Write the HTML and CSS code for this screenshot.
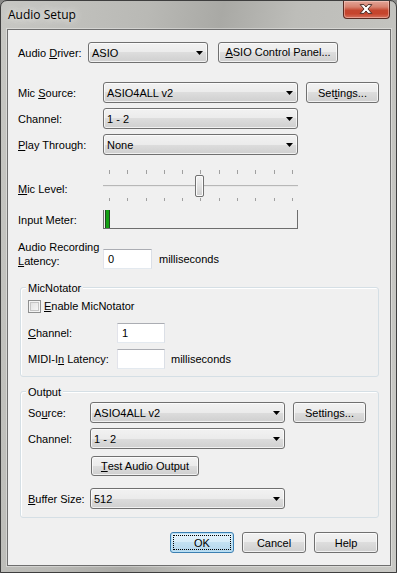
FILE: index.html
```html
<!DOCTYPE html>
<html>
<head>
<meta charset="utf-8">
<link rel="stylesheet" href="styles.css">
</head>
<body>
<div class="window">
  <div class="titlebar">
    <span class="title">Audio Setup</span>
    <div class="close">
      <svg width="47" height="18" viewBox="0 0 47 18">
        <path d="M17.5 4.5h4l2 2.5 2-2.5h4l-4 4.5 4 4.5h-4l-2-2.5-2 2.5h-4l4-4.5z" fill="#fff" stroke="#4a2a24" stroke-width="1" stroke-linejoin="round"/>
      </svg>
    </div>
  </div>
  <div class="client">
    <div class="row r1">
      <span class="lbl w70">Audio <u>D</u>river:</span>
      <div class="combo w120"><span>ASIO</span><svg class="arr" width="7" height="4" viewBox="0 0 7 4"><path d="M0 0h7L3.5 4z"/></svg></div>
      <div class="btn btn-asio"><u>A</u>SIO Control Panel...</div>
    </div>
    <div class="row r2">
      <span class="lbl w85">Mic <u>S</u>ource:</span>
      <div class="combo w195"><span>ASIO4ALL v2</span><svg class="arr" width="7" height="4" viewBox="0 0 7 4"><path d="M0 0h7L3.5 4z"/></svg></div>
      <div class="btn btn-set">Set<u>t</u>ings...</div>
    </div>
    <div class="row r3">
      <span class="lbl w85">Channel:</span>
      <div class="combo w195"><span>1 - 2</span><svg class="arr" width="7" height="4" viewBox="0 0 7 4"><path d="M0 0h7L3.5 4z"/></svg></div>
    </div>
    <div class="row r3">
      <span class="lbl w85"><u>P</u>lay Through:</span>
      <div class="combo w195"><span>None</span><svg class="arr" width="7" height="4" viewBox="0 0 7 4"><path d="M0 0h7L3.5 4z"/></svg></div>
    </div>
    <div class="row r-slider">
      <span class="lbl w85 lbl-slider"><u>M</u>ic Level:</span>
      <div class="slider">
        <div class="ticks top"><i></i><i></i><i></i><i></i><i></i><i></i><i></i><i></i><i></i><i></i><i></i></div>
        <div class="track"></div>
        <div class="ticks bot"><i></i><i></i><i></i><i></i><i></i><i></i><i></i><i></i><i></i><i></i><i></i></div>
        <div class="thumb"></div>
      </div>
    </div>
    <div class="row r-meter">
      <span class="lbl w85">Input Meter:</span>
      <div class="meter"><div class="bar"></div></div>
    </div>
    <div class="row r-lat">
      <span class="lbl w85 lbl-2">Audio Recording<br><u>L</u>atency:</span>
      <div class="input w49">0</div>
      <span class="ms ms1">milliseconds</span>
    </div>

    <div class="group g1">
      <span class="gtitle">MicNotator</span>
      <div class="grow g-check">
        <span class="check"></span><span class="ctext"><u>E</u>nable MicNotator</span>
      </div>
      <div class="grow g-ch">
        <span class="lbl w89"><u>C</u>hannel:</span>
        <div class="input w48">1</div>
      </div>
      <div class="grow g-midi">
        <span class="lbl w89">MIDI-I<u>n</u> Latency:</span>
        <div class="input w48"></div>
        <span class="ms ms2">milliseconds</span>
      </div>
    </div>

    <div class="group g2">
      <span class="gtitle">Output</span>
      <div class="grow o-src">
        <span class="lbl w62">So<u>u</u>rce:</span>
        <div class="combo w195"><span>ASIO4ALL v2</span><svg class="arr" width="7" height="4" viewBox="0 0 7 4"><path d="M0 0h7L3.5 4z"/></svg></div>
        <div class="btn btn-set">Settings...</div>
      </div>
      <div class="grow o-ch">
        <span class="lbl w62">Channel:</span>
        <div class="combo w195"><span>1 - 2</span><svg class="arr" width="7" height="4" viewBox="0 0 7 4"><path d="M0 0h7L3.5 4z"/></svg></div>
      </div>
      <div class="grow o-test">
        <div class="btn btn-test"><u>T</u>est Audio Output</div>
      </div>
      <div class="grow o-buf">
        <span class="lbl w62"><u>B</u>uffer Size:</span>
        <div class="combo w195"><span>512</span><svg class="arr" width="7" height="4" viewBox="0 0 7 4"><path d="M0 0h7L3.5 4z"/></svg></div>
      </div>
    </div>

    <div class="row r-btns">
      <div class="btn bbtn ok"><span class="focus">OK</span></div>
      <div class="btn bbtn">Cancel</div>
      <div class="btn bbtn">Help</div>
    </div>
  </div>
</div>
</body>
</html>
```

FILE: styles.css
```css
html, body {
  margin: 0;
  padding: 0;
  background: #8a8a88;
}
body {
  font-family: "Liberation Sans", Arial, sans-serif;
  font-size: 11px;
  color: #000;
}
.window {
  width: 397px;
  height: 573px;
  box-sizing: border-box;
  border: 1px solid #3e3e3e;
  border-radius: 7px 7px 0 0;
  background: linear-gradient(100deg, #c7c7c3 0%, #b9b9b5 30%, #a9a9a5 45%, #bdbdb9 60%, #c9c9c5 100%);
  display: flex;
  flex-direction: column;
  overflow: hidden;
}
.titlebar {
  height: 28px;
  flex: none;
  display: flex;
  justify-content: space-between;
  align-items: flex-start;
  padding: 0 6px 0 7px;
}
.title {
  font-family: "Open Sans", "Liberation Sans", sans-serif;
  font-size: 12px;
  line-height: 16px;
  margin-top: 6px;
  color: #000;
  text-shadow: 0 0 6px #e8e8e4, 0 0 8px #e8e8e4;
}
.close {
  width: 47px;
  height: 18px;
  box-sizing: border-box;
  border: 1px solid #5a2b22;
  border-top: none;
  border-radius: 0 0 4px 4px;
  background: linear-gradient(#e3a598 0%, #d7826f 35%, #c4462f 55%, #c6442c 75%, #d5715e 100%);
  box-shadow: inset 0 0 0 1px rgba(255, 220, 210, 0.45);
  display: flex;
}
.close svg {
  display: block;
  margin: -1px 0 0 -1px;
}
.client {
  flex: 1;
  margin: 0 5px 6px 6px;
  border: 1px solid #6f6f6f;
  background: #f0f0f0;
  padding: 0 11px 0 10px;
  display: flex;
  flex-direction: column;
  box-shadow: 0 0 0 1px rgba(255,255,255,0.35);
}
.row, .grow {
  display: flex;
  align-items: center;
  flex: none;
}
.lbl {
  display: block;
  line-height: 14px;
  white-space: nowrap;
  flex: none;
}
.w62 { width: 62px; }
.w70 { width: 70px; }
.w85 { width: 85px; }
.w89 { width: 89px; }
.w120 { width: 120px; }
.w195 { width: 195px; }
.w48 { width: 48px; }
.w49 { width: 49px; }

.r1 { margin-top: 12px; height: 21px; }
.r2 { margin-top: 19px; height: 21px; }
.r3 { margin-top: 5px; height: 21px; }
.r-slider { margin-top: 15px; height: 32px; align-items: flex-start; }
.lbl-slider { margin-top: 12px; }
.r-meter { margin-top: 8px; height: 19px; }
.r-lat { margin-top: 11px; height: 29px; align-items: flex-start; }
.r-lat .input { margin-top: 9px; }
.ms1 { margin-left: 7px; margin-top: 12px; line-height: 14px; }

.combo {
  height: 21px;
  box-sizing: border-box;
  border: 1px solid #707070;
  border-radius: 3px;
  background: linear-gradient(#f2f2f2 0%, #ebebeb 50%, #dddddd 50%, #cfcfcf 100%);
  box-shadow: inset 0 0 0 1px rgba(255,255,255,0.7);
  display: flex;
  align-items: center;
  justify-content: space-between;
  padding: 0 4px 0 3px;
  flex: none;
}
.combo span { line-height: 14px; }
.arr { display: block; fill: #000; }
.btn {
  height: 21px;
  box-sizing: border-box;
  border: 1px solid #707070;
  border-radius: 3px;
  background: linear-gradient(#f2f2f2 0%, #ebebeb 50%, #dddddd 50%, #cfcfcf 100%);
  box-shadow: inset 0 0 0 1px rgba(255,255,255,0.7);
  display: flex;
  align-items: center;
  justify-content: center;
  line-height: 14px;
  flex: none;
  white-space: nowrap;
}
.btn-asio { width: 120px; margin-left: 10px; margin-top: -1px; }
.btn-set { width: 73px; margin-left: 8px; }

.slider {
  position: relative;
  width: 195px;
  height: 32px;
  display: flex;
  flex-direction: column;
}
.ticks {
  display: flex;
  justify-content: space-between;
  padding: 0 5px 0 6px;
}
.ticks i {
  display: block;
  width: 1px;
  background: #a0a0a0;
}
.ticks.top i { height: 4px; }
.ticks.bot { margin-top: 11px; }
.ticks.bot i { height: 3px; }
.track {
  margin-top: 11px;
  height: 1px;
  background: #b7b7b7;
  border-bottom: 1px solid #e8e8e8;
}
.thumb {
  position: absolute;
  left: 92px;
  top: 5px;
  width: 9px;
  height: 22px;
  box-sizing: border-box;
  border: 1px solid #707070;
  border-radius: 2px;
  background: linear-gradient(#f4f4f4, #e0e0e0 55%, #cfcfcf);
  box-shadow: inset 0 0 0 1px #fbfbfb;
}
.meter {
  width: 195px;
  height: 19px;
  box-sizing: border-box;
  border: 1px solid #6d6d6d;
  border-top: none;
  padding-left: 1px;
  display: flex;
}
.bar {
  width: 3px;
  height: 100%;
  box-sizing: content-box;
  border-left: 1px solid #224422;
  border-right: 1px solid #224422;
  background: #12a012;
}
.input {
  height: 20px;
  box-sizing: border-box;
  border: 1px solid;
  border-color: #abadb3 #dbdfe6 #e3e9ef #e2e3ea;
  background: #fff;
  padding-left: 4px;
  display: flex;
  align-items: center;
  line-height: 14px;
  flex: none;
}

.group {
  flex: none;
  width: 359px;
  margin-left: 2px;
  box-sizing: border-box;
  border: 1px solid #d5dfe5;
  border-radius: 3px;
  padding: 0 0 0 7px;
  display: flex;
  flex-direction: column;
  box-shadow: inset 1px 1px 0 #fff;
}
.gtitle {
  display: block;
  align-self: flex-start;
  margin: -7px 0 0 -2px;
  padding: 0 2px;
  background: #f0f0f0;
  line-height: 14px;
}
.g1 { margin-top: 18px; padding-bottom: 7px; }
.g2 { margin-top: 14px; padding-bottom: 8px; }
.g-check { margin-top: 4px; height: 14px; }
.check {
  display: block;
  width: 13px;
  height: 13px;
  box-sizing: border-box;
  border: 1px solid #8e8f8f;
  background: linear-gradient(135deg, #dcdcdc, #fbfbfb);
  box-shadow: inset 0 0 0 1px #f4f4f4, inset 0 0 0 2px #c5c5c5;
  flex: none;
}
.ctext { margin-left: 3px; line-height: 14px; }
.g-ch { margin-top: 10px; height: 20px; }
.g-midi { margin-top: 6px; height: 20px; }
.ms2 { margin-left: 6px; line-height: 14px; }
.o-src { margin-top: 3px; height: 21px; }
.o-ch { margin-top: 5px; height: 21px; }
.o-test { margin-top: 7px; height: 20px; }
.btn-test { width: 108px; height: 20px; margin-left: 63px; }
.o-buf { margin-top: 12px; height: 21px; }

.r-btns {
  margin-top: 14px;
  height: 21px;
  justify-content: flex-end;
  gap: 8px;
  padding-right: 1px;
}
.bbtn { width: 64px; }
.ok {
  border-color: #3c7fb1;
  background: linear-gradient(#e5f3fb 0%, #d6ecf8 50%, #c3e1f2 50%, #b5d7ec 100%);
  box-shadow: inset 0 0 0 1px #b9e0f5;
  position: relative;
}
.ok .focus {
  position: absolute;
  left: 2px;
  right: 2px;
  top: 2px;
  bottom: 2px;
  border: 1px dotted #000;
  display: flex;
  align-items: center;
  justify-content: center;
}
```
